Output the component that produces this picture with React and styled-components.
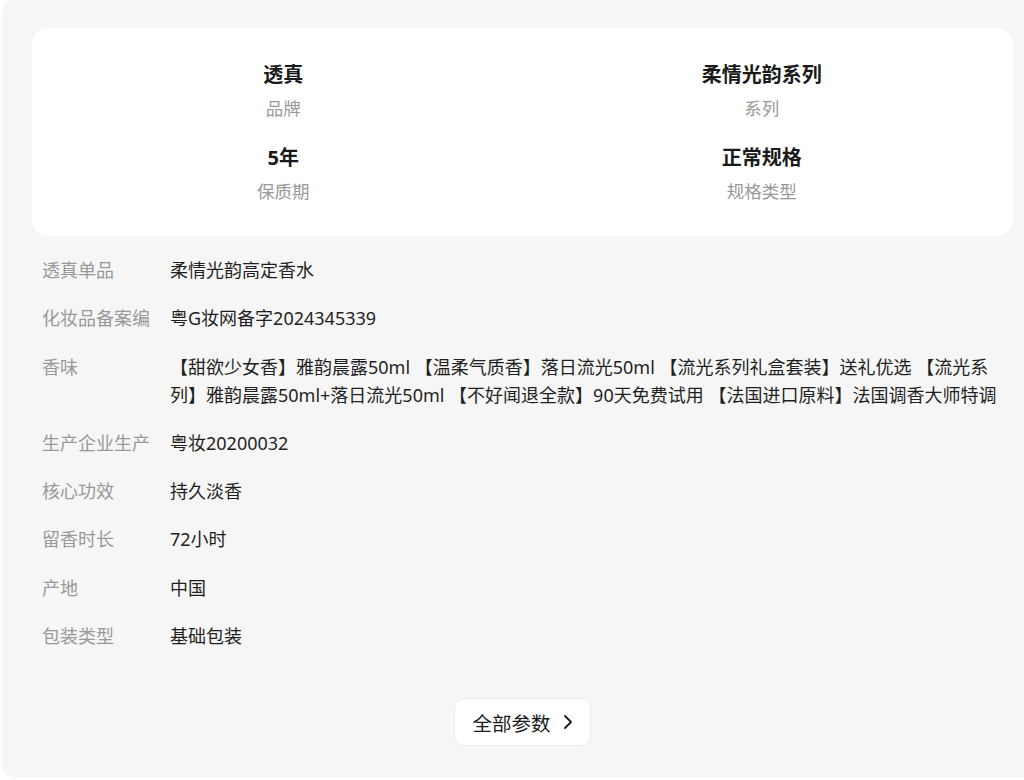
import React from "react";
import styled, { createGlobalStyle } from "styled-components";

//#region Styled Components
const GlobalStyle = createGlobalStyle`
  html, body {
    margin: 0;
    padding: 0;
    background: #ffffff;
  }
  body {
    font-family: "Noto Sans", "Noto Sans CJK SC", sans-serif;
    color: #1f1f1f;
  }
`;

const Page = styled.div`
  width: 1024px;
  height: 780px;
  overflow: hidden;
  padding-left: 2px;
  box-sizing: border-box;
`;

const Panel = styled.section`
  width: 1041px;
  box-sizing: border-box;
  padding: 28px 30px 31px;
  background-color: #f6f6f6;
  border-radius: 12px;
  display: flex;
  flex-direction: column;
`;

const SummaryCard = styled.div`
  background-color: #ffffff;
  border-radius: 16px;
  padding: 33px 12px 33px;
  display: grid;
  grid-template-columns: 1fr 1fr;
  row-gap: 24px;
`;

const SummaryItem = styled.div`
  display: flex;
  flex-direction: column;
  align-items: center;
`;

const SummaryValue = styled.div`
  font-size: 20px;
  line-height: 28px;
  font-weight: 700;
  color: #1a1a1a;
`;

const SummaryLabel = styled.div`
  margin-top: 7px;
  font-size: 17.5px;
  line-height: 24px;
  color: #999999;
`;

const ParamList = styled.div`
  margin-top: 20px;
  padding-left: 10px;
  display: flex;
  flex-direction: column;
  gap: 20.3px;
`;

const ParamRow = styled.div`
  display: grid;
  grid-template-columns: 128px 1fr;
  font-size: 18px;
  line-height: 28px;
`;

const ParamName = styled.div`
  color: #999999;
  white-space: nowrap;
`;

const ParamValue = styled.div`
  color: #1f1f1f;
`;

const Footer = styled.div`
  margin-top: 48px;
  display: flex;
  justify-content: center;
`;

const AllParamsButton = styled.button`
  box-sizing: border-box;
  height: 48px;
  padding: 0 17px;
  display: flex;
  align-items: center;
  gap: 12px;
  background-color: #ffffff;
  border: 1px solid #ebebeb;
  border-radius: 10px;
  font-family: inherit;
  font-size: 19.5px;
  color: #1a1a1a;
  cursor: pointer;
`;
//#endregion

const summary = [
  { value: "透真", label: "品牌" },
  { value: "柔情光韵系列", label: "系列" },
  { value: "5年", label: "保质期" },
  { value: "正常规格", label: "规格类型" },
];

const params = [
  { name: "透真单品", value: "柔情光韵高定香水" },
  { name: "化妆品备案编", value: "粤G妆网备字2024345339" },
  {
    name: "香味",
    value:
      "【甜欲少女香】雅韵晨露50ml 【温柔气质香】落日流光50ml 【流光系列礼盒套装】送礼优选 【流光系列】雅韵晨露50ml+落日流光50ml 【不好闻退全款】90天免费试用 【法国进口原料】法国调香大师特调",
  },
  { name: "生产企业生产", value: "粤妆20200032" },
  { name: "核心功效", value: "持久淡香" },
  { name: "留香时长", value: "72小时" },
  { name: "产地", value: "中国" },
  { name: "包装类型", value: "基础包装" },
];

const ChevronRight = () => (
  <svg width="10" height="16" viewBox="0 0 10 16" fill="none">
    <polyline
      points="2,2 8,8 2,14"
      stroke="#1a1a1a"
      strokeWidth="1.8"
      strokeLinecap="round"
      strokeLinejoin="round"
    />
  </svg>
);

const App = () => {
  return (
    <>
      <GlobalStyle />
      <Page>
        <Panel>
          <SummaryCard>
            {summary.map((item) => (
              <SummaryItem key={item.label}>
                <SummaryValue>{item.value}</SummaryValue>
                <SummaryLabel>{item.label}</SummaryLabel>
              </SummaryItem>
            ))}
          </SummaryCard>
          <ParamList>
            {params.map((p) => (
              <ParamRow key={p.name}>
                <ParamName>{p.name}</ParamName>
                <ParamValue>{p.value}</ParamValue>
              </ParamRow>
            ))}
          </ParamList>
          <Footer>
            <AllParamsButton>
              全部参数
              <ChevronRight />
            </AllParamsButton>
          </Footer>
        </Panel>
      </Page>
    </>
  );
};

export default App;
